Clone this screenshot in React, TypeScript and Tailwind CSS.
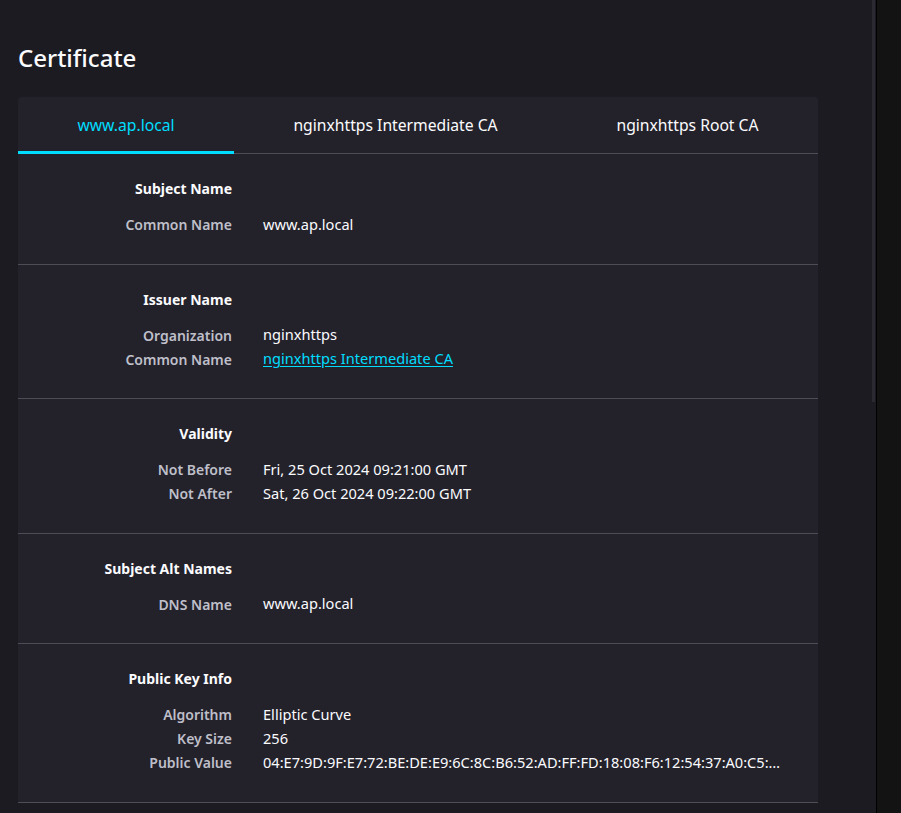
import React from "react";

type Row = { label: string; value: string; link?: boolean };
type Section = { title: string; rows: Row[] };

const sections: Section[] = [
  { title: "Subject Name", rows: [{ label: "Common Name", value: "www.ap.local" }] },
  {
    title: "Issuer Name",
    rows: [
      { label: "Organization", value: "nginxhttps" },
      { label: "Common Name", value: "nginxhttps Intermediate CA", link: true },
    ],
  },
  {
    title: "Validity",
    rows: [
      { label: "Not Before", value: "Fri, 25 Oct 2024 09:21:00 GMT" },
      { label: "Not After", value: "Sat, 26 Oct 2024 09:22:00 GMT" },
    ],
  },
  { title: "Subject Alt Names", rows: [{ label: "DNS Name", value: "www.ap.local" }] },
  {
    title: "Public Key Info",
    rows: [
      { label: "Algorithm", value: "Elliptic Curve" },
      { label: "Key Size", value: "256" },
      {
        label: "Public Value",
        value:
          "04:E7:9D:9F:E7:72:BE:DE:E9:6C:8C:B6:52:AD:FF:FD:18:08:F6:12:54:37:A0:C5:3A:1B:9E:44:12:7F",
      },
    ],
  },
];

const tabs = ["www.ap.local", "nginxhttps Intermediate CA", "nginxhttps Root CA"];

export default function App() {
  return (
    <div
      className="flex h-[813px] w-[901px] overflow-hidden bg-[#1c1b22] text-[#fbfbfe]"
      style={{ fontFamily: '"Noto Sans", "Open Sans", sans-serif' }}
    >
      <div className="flex-1 min-w-0 pl-[18px] pr-[54px]">
        <h1 className="mt-[42px] h-[32px] text-[24px] leading-[32px] font-medium">Certificate</h1>
        <div className="mt-[23px] rounded-[4px] bg-[#23222b]">
          <div className="flex h-[57px] border-b border-[#4e4d57]">
            {tabs.map((t, i) => (
              <div
                key={t}
                className={
                  i === 0
                    ? "flex-auto flex items-center justify-center border-b-[3px] border-[#00ddff] text-[#00ddff] text-[15.7px] pt-[3px] -mb-px"
                    : "flex-auto flex items-center justify-center border-b-[3px] border-transparent text-[15.7px] pt-[3px] -mb-px"
                }
              >
                {t}
              </div>
            ))}
          </div>
          {sections.map((s) => (
            <div key={s.title} className="border-b border-[#4e4d57] pt-[22.5px] pb-[27px]">
              <div className="flex h-[24px] items-center">
                <div className="w-[214px] text-right text-[14px] font-bold">{s.title}</div>
              </div>
              <div className="mt-[12px] flex flex-col">
                {s.rows.map((r) => (
                  <div key={r.label + r.value} className="flex h-[24px] items-center text-[14.6px]">
                    <div className="w-[214px] shrink-0 text-right text-[14px] font-semibold text-[#bfbfc9]">
                      {r.label}
                    </div>
                    <div
                      className={
                        r.link
                          ? "min-w-0 flex-1 truncate pl-[31px] pr-[32px] text-[#00ddff] underline underline-offset-2"
                          : "min-w-0 flex-1 truncate pl-[31px] pr-[32px]"
                      }
                    >
                      {r.value}
                    </div>
                  </div>
                ))}
              </div>
            </div>
          ))}
        </div>
      </div>
      <div className="w-[4px] shrink-0">
        <div className="h-[402px] w-[3px] bg-[#2b2a33]"></div>
      </div>
      <div className="w-[25px] shrink-0 border-l border-[#000000] bg-[#131313]"></div>
    </div>
  );
}
